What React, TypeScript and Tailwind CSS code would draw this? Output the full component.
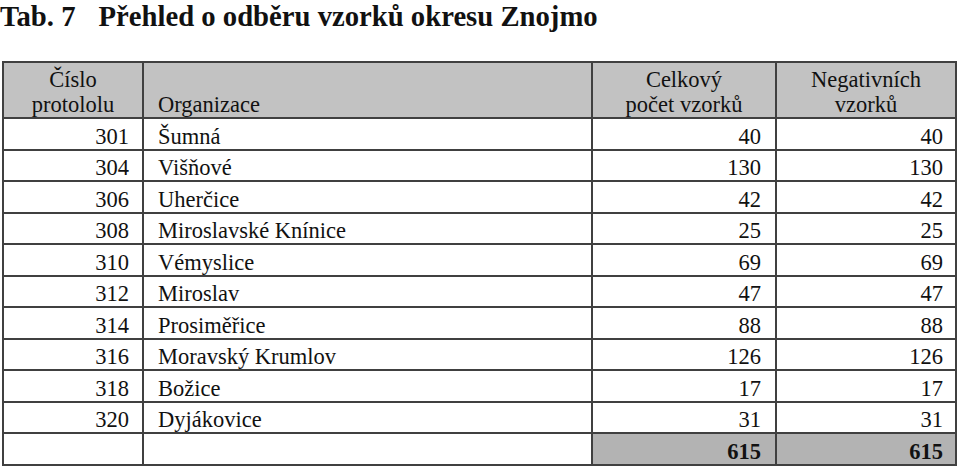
const rows = [
  { id: "301", name: "Šumná", total: "40", neg: "40" },
  { id: "304", name: "Višňové", total: "130", neg: "130" },
  { id: "306", name: "Uherčice", total: "42", neg: "42" },
  { id: "308", name: "Miroslavské Knínice", total: "25", neg: "25" },
  { id: "310", name: "Vémyslice", total: "69", neg: "69" },
  { id: "312", name: "Miroslav", total: "47", neg: "47" },
  { id: "314", name: "Prosiměřice", total: "88", neg: "88" },
  { id: "316", name: "Moravský Krumlov", total: "126", neg: "126" },
  { id: "318", name: "Božice", total: "17", neg: "17" },
  { id: "320", name: "Dyjákovice", total: "31", neg: "31" },
]

const cell = "border-2 border-[#404040] p-0 align-bottom leading-[25px]"

export default function App() {
  return (
    <div className="w-[959px] h-[466px] overflow-hidden bg-white text-[#111] font-['Liberation_Serif','Times_New_Roman',serif]">
      <h1 className="text-[28.7px] font-bold leading-[32px] whitespace-nowrap">
        Tab. 7<span className="ml-[23px]">Přehled o odběru vzorků okresu Znojmo</span>
      </h1>

      <div className="pt-[29px] pl-[2px]">
        <table className="table-fixed border-collapse w-[953px] text-[22.5px]">
          <colgroup>
            <col className="w-[140px]" />
            <col className="w-[449px]" />
            <col className="w-[184px]" />
            <col className="w-[180px]" />
          </colgroup>
          <thead>
            <tr className="h-[56px] bg-[#c2c2c2]">
              <th className={`${cell} font-normal text-center`}>
                Číslo<br />protololu
              </th>
              <th className={`${cell} font-normal text-left pl-[14px]`}>Organizace</th>
              <th className={`${cell} font-normal text-center`}>
                Celkový<br />počet vzorků
              </th>
              <th className={`${cell} font-normal text-center`}>
                Negativních<br />vzorků
              </th>
            </tr>
          </thead>
          <tbody>
            {rows.map((r) => (
              <tr key={r.id} className="h-[31.5px]">
                <td className={`${cell} text-right pr-[13px]`}>{r.id}</td>
                <td className={`${cell} text-left pl-[14px]`}>{r.name}</td>
                <td className={`${cell} text-right pr-[14px]`}>{r.total}</td>
                <td className={`${cell} text-right pr-[12px]`}>{r.neg}</td>
              </tr>
            ))}
            <tr className="h-[31.5px]">
              <td className={cell}></td>
              <td className={cell}></td>
              <td className={`${cell} bg-[#b3b3b3] font-bold text-right pr-[14px]`}>615</td>
              <td className={`${cell} bg-[#b3b3b3] font-bold text-right pr-[12px]`}>615</td>
            </tr>
          </tbody>
        </table>
      </div>
    </div>
  )
}
